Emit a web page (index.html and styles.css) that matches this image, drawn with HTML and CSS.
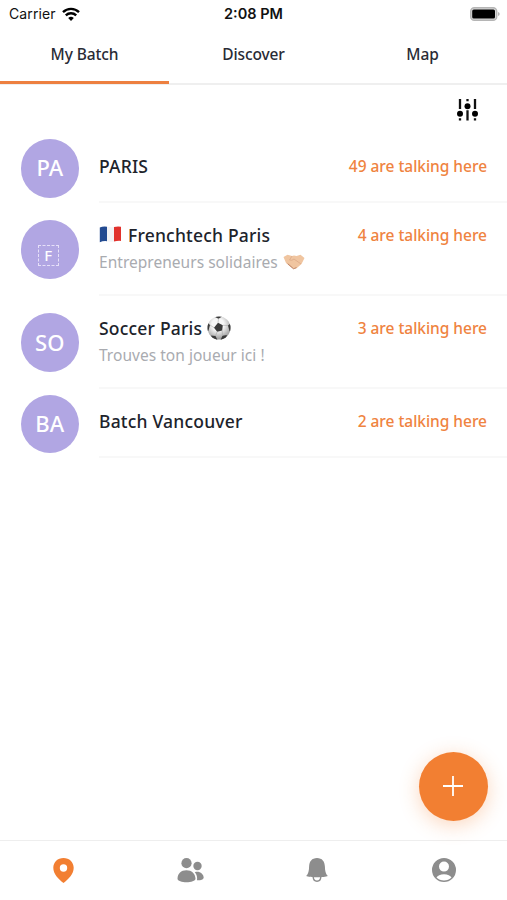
FILE: index.html
```html
<!DOCTYPE html>
<html lang="en">
<head>
<meta charset="utf-8">
<meta name="viewport" content="width=device-width">
<title>My Batch</title>
<link rel="stylesheet" href="styles.css">
</head>
<body>
<div class="app">
  <header class="status">
    <div class="carrier"><span>Carrier</span>
      <svg class="wifi" viewBox="0 0 18 14"><path d="M9 14 6.2 11.1a4 4 0 0 1 5.6 0z"/><path class="arc" d="M1 5.2a11.4 11.4 0 0 1 16 0M3.8 8.4a7.5 7.5 0 0 1 10.4 0"/></svg>
    </div>
    <time class="clock">2:08 PM</time>
    <svg class="battery" viewBox="0 0 30 14"><rect x=".7" y=".7" width="26" height="12.6" rx="3.6" fill="#d8d8d8" stroke="#b5b5b5" stroke-width="1.4"/><rect x="2.2" y="2.5" width="22.8" height="9" rx="1.6"/><path d="M28 5v4q1.7-.5 1.7-2T28 5z" fill="#b5b5b5"/></svg>
  </header>
  <nav class="tabs">
    <a class="tab active">My Batch</a>
    <a class="tab">Discover</a>
    <a class="tab">Map</a>
  </nav>
  <main class="content">
    <div class="toolbar">
      <svg class="filter" viewBox="0 0 22 24"><path d="M3 1v10M3 20.200v2.300M10.500 1v2.300M10.500 12.300v10.200M18 1v10M18 20.200v2.300"/><circle cx="3" cy="15.700" r="3"/><circle cx="10.500" cy="8.200" r="3"/><circle cx="18" cy="15.700" r="3"/></svg>
    </div>
    <section class="row">
      <div class="avatar">PA</div>
      <div class="body"><div class="line"><h2 class="name">PARIS</h2><span class="count">49 are talking here</span></div></div>
    </section>
    <section class="row tall">
      <div class="avatar"><span class="boxed">F</span></div>
      <div class="body">
        <div class="line"><h2 class="name"><svg class="flag" role="img" aria-label="France" viewBox="0 0 23 17"><path d="M.8 1.600Q4 .2 8 .8v14.400q-4-.4-7.200 1z" fill="#234b91"/><path d="M8 .8q3.500.8 7 .2v14.500q-3.500.7-7-.3z" fill="#f3f3f5"/><path d="M15 1q3.500-.7 7-.2v14.100q-3.500-.3-7 .6z" fill="#e1322d"/></svg>Frenchtech Paris</h2><span class="count">4 are talking here</span></div>
        <p class="sub">Entrepreneurs solidaires<svg class="hands" role="img" aria-label="Handshake" viewBox="0 0 22 16"><path d="M.5 3 4.500.8 9 2l2-.5 2.500.5L17.500.8 21.500 4l-3 6-5.500 4.800-2.500.2-4-3-3.500-3z" fill="#f0c5a0"/><path d="m9 2-2.500 4q2.500 1 4.500-1l7 5M4 9l6.500 5.500" fill="none" stroke="#dcaa88" stroke-width=".8"/><path d="m5 10 5.500 4.800 3-1.300" fill="none" stroke="#b67d63" stroke-width=".8"/></svg></p>
      </div>
    </section>
    <section class="row tall">
      <div class="avatar">SO</div>
      <div class="body">
        <div class="line"><h2 class="name">Soccer Paris<svg class="ball" role="img" aria-label="Soccer ball" viewBox="0 0 24 24"><defs><radialGradient id="shade" cx=".45" cy=".35" r=".65"><stop offset=".4" stop-color="#f7f7f7"/><stop offset="1" stop-color="#999"/></radialGradient><clipPath id="round"><circle cx="12" cy="12" r="11.500"/></clipPath></defs><circle cx="12" cy="12" r="11.500" fill="url(#shade)"/><g clip-path="url(#round)"><path d="m11 6.800 4.800 2.500-.6 5.200-5 1.200-3.200-4zM6 0h10l-4.500 2.800zM0 6l3 3-1.500 5.500L0 16zM24 7l-3 2.500L22.500 15l1.500 1zM4 19.500l4.500.5 2 4H6zM20 19l-4.500.8L13.500 24H18z" fill="#3a3a3a"/><path d="m11.500 2.800-.5 4M3 9l4 2.700M15.800 9.300 21 9.500M10.200 15.700 8.500 20M15.200 14.500l.3 5.300" stroke="#aaa" stroke-width=".6"/></g></svg></h2><span class="count">3 are talking here</span></div>
        <p class="sub">Trouves ton joueur ici !</p>
      </div>
    </section>
    <section class="row">
      <div class="avatar">BA</div>
      <div class="body"><div class="line"><h2 class="name">Batch Vancouver</h2><span class="count">2 are talking here</span></div></div>
    </section>
    <button class="fab" aria-label="Add"><svg viewBox="0 0 22 22"><path d="M11 1v20M1 11h20"/></svg></button>
  </main>
  <nav class="bottom">
    <a class="item selected"><svg viewBox="0 0 28 28"><path fill-rule="evenodd" d="M14.500 2C8.700 2 4.300 6.200 4.300 11.800c0 6.200 5 11.200 10.200 15.200 5.200-4 10.200-9 10.200-15.200C24.700 6.200 20.300 2 14.500 2zm0 6.300a3.700 3.700 0 1 1 0 7.400 3.700 3.700 0 0 1 0-7.400z"/></svg></a>
    <a class="item"><svg viewBox="0 0 28 28"><circle cx="10.500" cy="7.200" r="5.100"/><circle cx="21.500" cy="10" r="4.200"/><path d="M1.500 22.500C1.800 17.400 5 14.200 10.400 14.200s8.700 3.200 9.100 8.300c0 5-18 5-18 0zM18.800 16.200c4.800-1.400 8.800 1.800 8.900 5.500-.4 2-3.500 2.700-6.700 2.500.5-3.200-.2-5.800-2.200-8z"/></svg></a>
    <a class="item"><svg viewBox="0 0 28 28"><path d="M14 2c-5.200 0-7.700 3.500-7.900 8.500-.1 4.300-.7 7.300-2.900 9.500 3 1.700 18.600 1.700 21.600 0-2.200-2.200-2.800-5.200-2.900-9.500C21.700 5.500 19.200 2 14 2z"/><path class="clapper" d="M10.200 20.700c.2 6 7.400 6 7.600 0"/></svg></a>
    <a class="item"><svg viewBox="0 0 28 28"><path fill-rule="evenodd" d="M14 2a12 12 0 1 1 0 24 12 12 0 0 1 0-24zm0 3.600a5 5 0 1 0 0 10 5 5 0 0 0 0-10zm0 12.600c-3.700 0-6.500 1.300-7.500 3.200 3.700 4 11.300 4 15 0-1-1.900-3.800-3.200-7.500-3.200z"/></svg></a>
  </nav>
</div>
</body>
</html>
```
FILE: styles.css
```css
* { box-sizing: border-box; }
body { margin: 0; background: #fff; color: #20232b; font-family: "Noto Sans", sans-serif; }
svg { display: block; }
.app { height: 900px; display: flex; flex-direction: column; overflow: hidden; }
.status { height: 27px; flex: none; display: grid; grid-template-columns: 1fr auto 1fr; align-items: center; padding: 0 7px 0 9px; font-family: Inter, sans-serif; font-size: 14px; color: #111; }
.carrier { display: flex; align-items: center; gap: 6px; letter-spacing: .1px; }
.wifi { width: 18px; height: 14px; }
.arc { fill: none; stroke: #000; stroke-width: 2.400; }
.clock { font-weight: 600; font-size: 14.500px; position: relative; left: -1px; }
.battery { width: 30px; height: 14px; justify-self: end; }
.tabs { height: 58px; flex: none; display: grid; grid-template-columns: repeat(3, 1fr); border-bottom: 2px solid #efefef; }
.tab { height: 57px; padding-top: 16px; text-align: center; font-size: 15.500px; line-height: 22px; font-weight: 500; letter-spacing: -.1px; color: #292b35; }
.tab.active { height: 57px; border-bottom: 3px solid #ed8040; }
.content { flex: 1; position: relative; }
.toolbar { height: 48.500px; display: flex; justify-content: flex-end; padding: 13px 28px 0 0; }
.filter { width: 22px; height: 24px; }
.filter path { fill: none; stroke: #111; stroke-width: 2.300; }
.row { height: 69px; display: flex; padding-left: 20.500px; gap: 20px; }
.row.tall { height: 93.300px; }
.avatar { width: 58.500px; height: 58.500px; margin-top: 5.500px; padding-bottom: 2px; flex: none; display: flex; align-items: center; justify-content: center; border-radius: 50%; background: #b1a6e3; color: #fff; font-size: 22px; font-weight: 500; }
.tall .avatar { margin-top: 17.500px; }
.boxed { width: 21px; height: 21px; margin: 14px 0 0 -3px; border: 1.500px dashed #e6e0f8; font-size: 15px; line-height: 18px; text-align: center; }
.body { flex: 1; border-bottom: 2px solid #f8f8f8; padding: 19px 20px 0 0; }
.line { height: 26px; display: flex; align-items: center; justify-content: space-between; }
.name { margin: 0; display: flex; align-items: center; font-size: 17.500px; font-weight: 500; letter-spacing: .2px; white-space: nowrap; }
.flag { width: 23px; height: 17px; margin-right: 6px; }
.ball { width: 24px; height: 24px; margin-left: 5px; }
.count { color: #ef8340; font-size: 15.500px; font-weight: 500; letter-spacing: -.03px; white-space: nowrap; }
.sub { margin: 2px 0 0; height: 24px; display: flex; align-items: center; color: #a9abb0; font-size: 15.500px; letter-spacing: .03px; white-space: nowrap; }
.hands { width: 22px; height: 16px; margin-left: 5px; }
.fab { position: absolute; right: 19.500px; bottom: 19.500px; width: 69px; height: 69px; border: 0; padding: 0; display: flex; align-items: center; justify-content: center; border-radius: 50%; background: #f27f32; box-shadow: 0 4px 20px rgba(242, 127, 50, .32); }
.fab svg { width: 22px; height: 22px; fill: none; stroke: #fff; stroke-width: 1.800; }
.bottom { height: 60px; flex: none; display: grid; grid-template-columns: repeat(4, 1fr); border-top: 1px solid #eee; }
.item { display: flex; justify-content: center; padding-top: 15px; fill: #8d8d8d; }
.item svg { width: 28px; height: 28px; }
.item.selected { fill: #f27f32; }
.clapper { fill: none; stroke: #8d8d8d; stroke-width: 1.400; }
```
